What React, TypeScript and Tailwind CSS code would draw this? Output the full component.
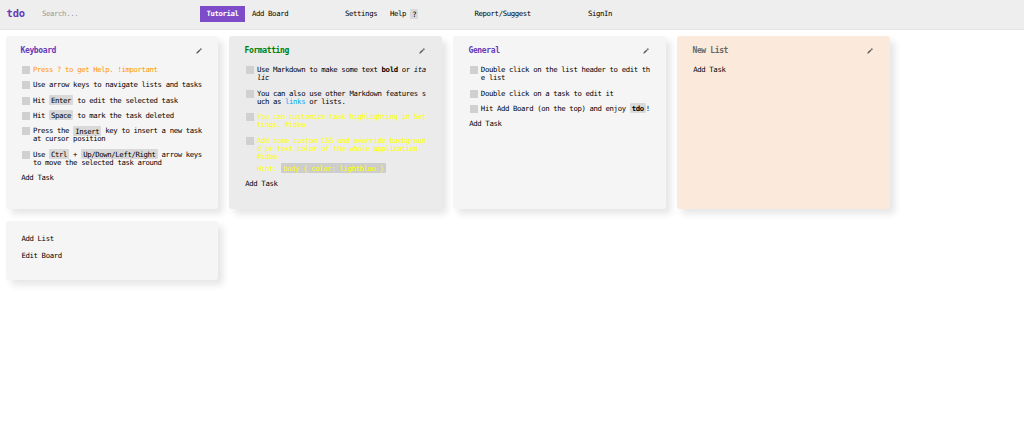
import type { ReactNode } from 'react';
import clsx from 'clsx';

type List = {
    title: string;
    card: string;
    titleColor: string;
    tasks: { color?: string; body: ReactNode }[];
};

function Code({ children, className = 'bg-[#d9d9d9]' }: { children: ReactNode; className?: string }) {
    return <code className={clsx('rounded-[1px] px-[2px] py-[0.5px] font-[inherit] text-[7.3px]', className)}>{children}</code>;
}

const lists: List[] = [
    {
        title: 'Keyboard',
        card: 'bg-[#f5f5f5]',
        titleColor: 'text-[#673ab7]',
        tasks: [
            { color: 'text-[#ff9800]', body: 'Press ? to get Help. !important' },
            { body: 'Use arrow keys to navigate lists and tasks' },
            { body: <>Hit <Code>Enter</Code> to edit the selected task</> },
            { body: <>Hit <Code>Space</Code> to mark the task deleted</> },
            { body: <>Press the <Code>Insert</Code> key to insert a new task<br />at cursor position</> },
            { body: <>Use <Code>Ctrl</Code> + <Code>Up/Down/Left/Right</Code> arrow keys<br />to move the selected task around</> },
        ],
    },
    {
        title: 'Formatting',
        card: 'bg-[#ebebeb]',
        titleColor: 'text-[#008000]',
        tasks: [
            { body: <>Use Markdown to make some text <b>bold</b> or <i>ita<br />lic</i></> },
            { body: <>You can also use other Markdown features s<br />uch as <a className="text-[#03a9f4]">links</a> or lists.</> },
            { color: 'text-[#ffff00]', body: <>You can customize task highlighting in Set<br />tings. #idea</> },
            {
                color: 'text-[#ffff00]',
                body: (
                    <>
                        Add some custom CSS and override backgroun<br />
                        d or text color of the whole application.<br />
                        #idea
                        <p className="mt-[3.4px]">
                            Hint: <Code className="bg-[#cdcdcd]">{'body { color: lightblue }'}</Code>
                        </p>
                    </>
                ),
            },
        ],
    },
    {
        title: 'General',
        card: 'bg-[#f5f5f5]',
        titleColor: 'text-[#673ab7]',
        tasks: [
            { body: <>Double click on the list header to edit th<br />e list</> },
            { body: 'Double click on a task to edit it' },
            { body: <>Hit Add Board (on the top) and enjoy <Code><b>tdo</b></Code>!</> },
        ],
    },
    {
        title: 'New List',
        card: 'bg-[#fbeadb]',
        titleColor: 'text-[#696969]',
        tasks: [],
    },
];

function Pencil() {
    return (
        <svg className="h-[6px] w-[6px]" viewBox="0 0 6 6" fill="#555">
            <path d="M0.3 5.7 L0.7 4.3 L3.5 1.5 L4.5 2.5 L1.7 5.3 Z" />
            <path d="M3.8 1.1 L4.5 0.4 Q4.9 0.1 5.3 0.5 L5.5 0.7 Q5.9 1.1 5.6 1.5 L4.9 2.2 Z" />
        </svg>
    );
}

function Card({ children, className }: { children: ReactNode; className?: string }) {
    return (
        <section className={clsx('w-[212.4px] rounded-[3px] shadow-[5px_5px_7px_rgba(0,0,0,0.1)]', className)}>
            {children}
        </section>
    );
}

function TaskList({ list }: { list: List }) {
    return (
        <Card className={clsx('h-[173px] pt-[10px] pr-[15.4px] pl-[15px]', list.card)}>
            <header className="flex h-[9px] items-center justify-between pr-[1px]">
                <h2 className={clsx('pt-[1.4px] text-[8px] font-bold tracking-[-0.37px]', list.titleColor)}>{list.title}</h2>
                <Pencil />
            </header>
            <ul className="mt-[11px]">
                {list.tasks.map((task, i) => (
                    <li key={i} className="mb-[7.1px] flex whitespace-pre">
                        <span className="mr-[3px] ml-[1.4px] h-[8px] w-[8px] shrink-0 bg-[#d0d0d0]" />
                        <div className={task.color}>{task.body}</div>
                    </li>
                ))}
            </ul>
            <button className="mt-[1px] block pl-[0.8px]">Add Task</button>
        </Card>
    );
}

export default function App() {
    return (
        <div className="h-[447px] overflow-hidden bg-white font-['DejaVu_Sans_Mono',monospace] text-[7.3px] leading-[8.2px] tracking-[-0.37px] text-black">
            <nav className="flex h-[30px] border-b border-[#e4e4e4] bg-[#eeeeee] pl-[6.5px] whitespace-nowrap">
                <div className="w-[35.5px] pt-[8px] text-[10.4px] leading-[10px] font-bold tracking-[-0.1px] text-[#673ab7]">tdo</div>
                <div className="w-[158px] pt-[9.5px] text-[#999]">Search...</div>
                <div className="mt-[6px] h-[16px] w-[45px] bg-[#7e4cc8] pt-[4.1px] text-center font-bold text-white">Tutorial</div>
                <a className="w-[100px] pt-[10.1px] pl-[7px]">Add Board</a>
                <a className="w-[45px] pt-[10.1px]">Settings</a>
                <a className="w-[84.5px] pt-[10.1px]">Help <Code>?</Code></a>
                <a className="w-[113.5px] pt-[10.1px]">Report/Suggest</a>
                <a className="pt-[10.1px]">SignIn</a>
            </nav>
            <main className="flex flex-wrap gap-x-[11.6px] gap-y-[12px] pt-[6px] pl-[5.5px]">
                {lists.map((list) => (
                    <TaskList key={list.title} list={list} />
                ))}
                <Card className="flex h-[59px] flex-col items-start gap-[8px] bg-[#f5f5f5] pt-[14.4px] pl-[16px]">
                    <button>Add List</button>
                    <button>Edit Board</button>
                </Card>
            </main>
        </div>
    );
}
